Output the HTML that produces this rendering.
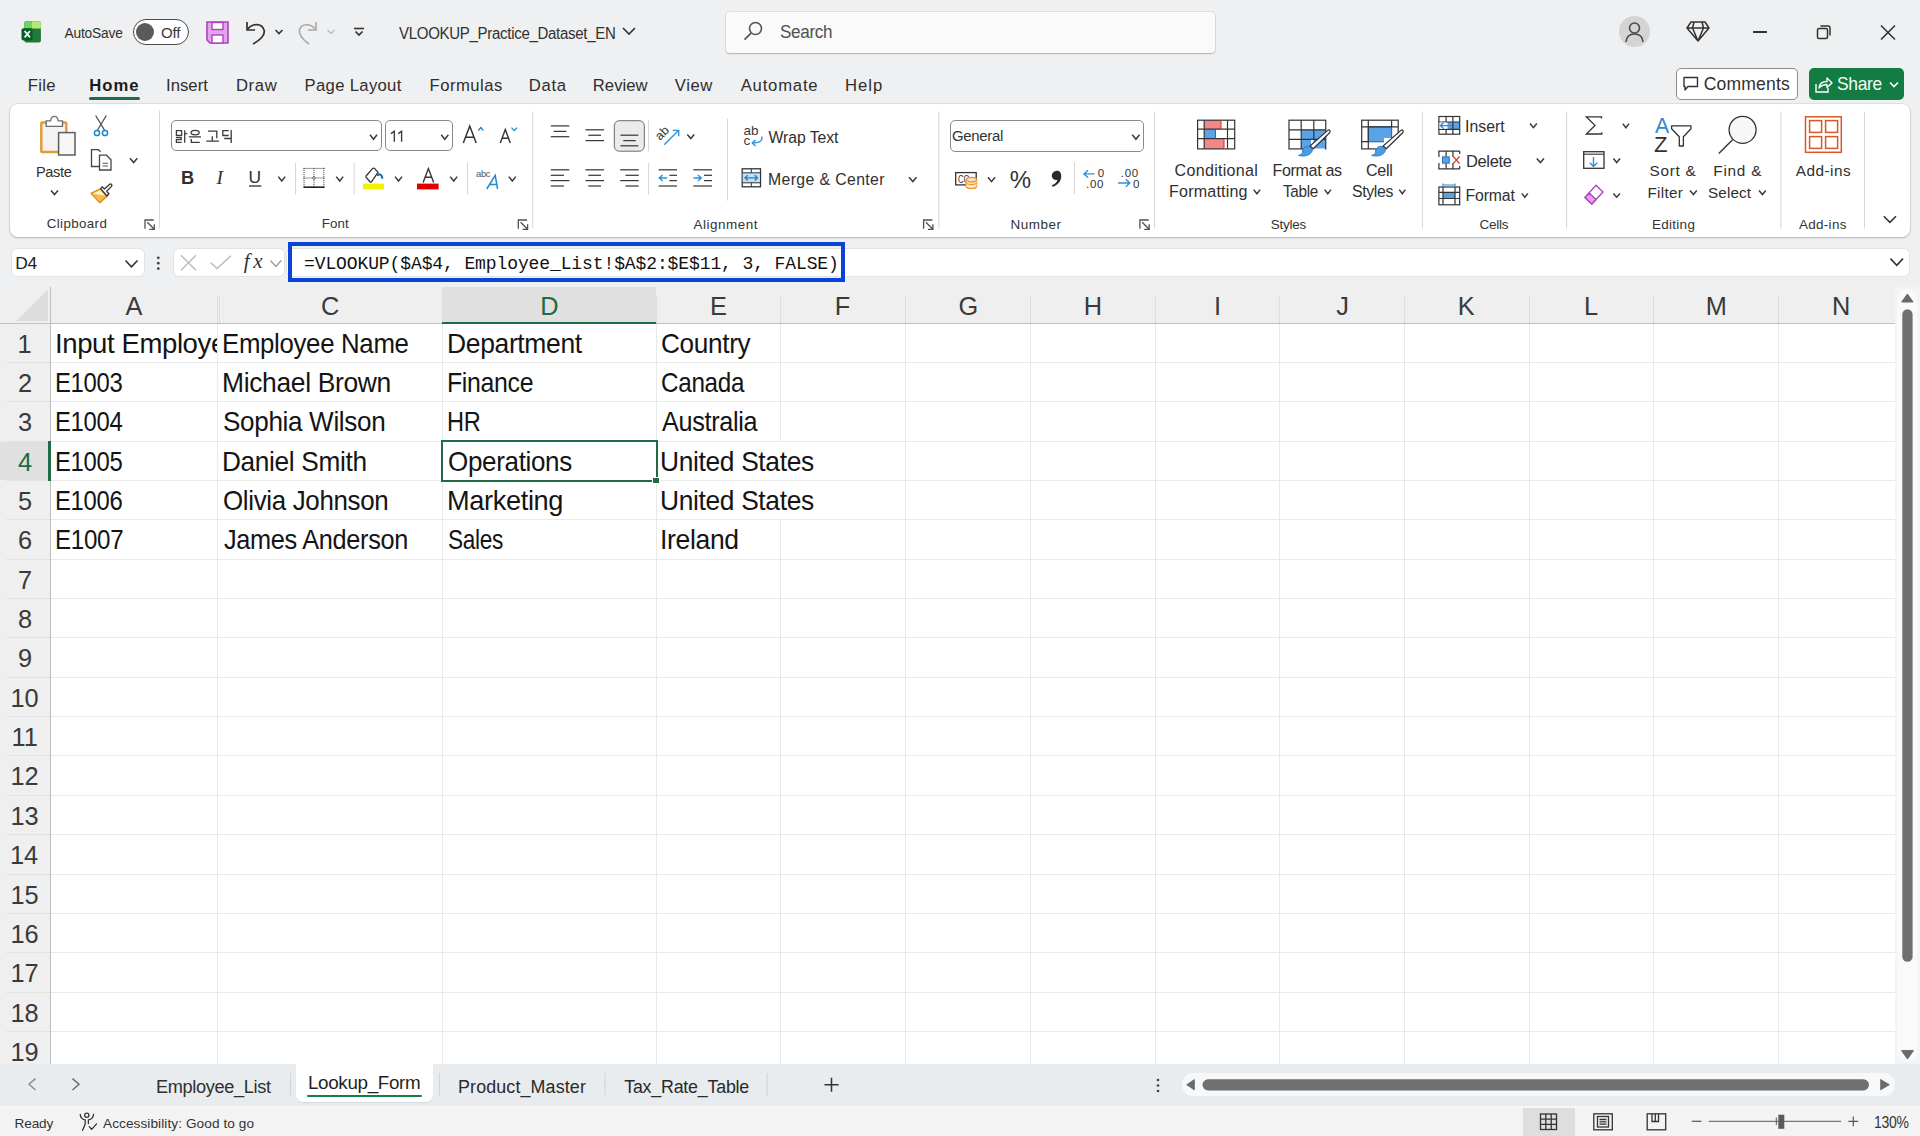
<!DOCTYPE html><html><head><meta charset="utf-8"><style>html,body{margin:0;padding:0;width:1920px;height:1136px;overflow:hidden;position:relative;background:#eef0f1;font-family:"Liberation Sans",sans-serif}</style></head><body><svg style="position:absolute;left:19px;top:20px;" width="24" height="24" viewBox="0 0 24 24" fill="none">
      <rect x="5.3" y="1.2" width="16.6" height="21.2" rx="2" fill="#1d7a38"/>
      <path d="M5.3 3.2 a2 2 0 0 1 2 -2 h5.6 v7.3 h-7.6 z" fill="#6ed462"/>
      <path d="M12.9 1.2 h7 a2 2 0 0 1 2 2 v5.3 h-9 z" fill="#b5e774"/>
      <rect x="2.5" y="8.3" width="11" height="12.2" rx="2" fill="#0b5a27"/>
      <path d="M5.6 11 L11 17.3 M11 11 L5.6 17.3" stroke="#e8fff0" stroke-width="1.8"/>
    </svg>
<div style="position:absolute;left:64.40px;top:26.60px;white-space:nowrap;color:#303030;font-family:'Liberation Sans', sans-serif;font-size:13.77px;line-height:13.77px;font-weight:400;letter-spacing:-0.164px;">AutoSave</div>
<div style="position:absolute;left:132.5px;top:18.75px;width:56.25px;height:26.25px;border:1.6px solid #4a4a4a;border-radius:14px;box-sizing:border-box;background:#fff"></div>
<div style="position:absolute;left:136px;top:23px;width:18px;height:18px;background:#5a5a5a;border-radius:50%"></div>
<div style="position:absolute;left:160.90px;top:24.60px;white-space:nowrap;color:#3a3a3a;font-family:'Liberation Sans', sans-serif;font-size:15.07px;line-height:15.07px;font-weight:400;letter-spacing:-0.150px;">Off</div>
<svg style="position:absolute;left:206px;top:21px;" width="24" height="24" viewBox="0 0 24 24" fill="none">
      <path d="M1 1 H22 V22 H4 L1 19 Z" fill="#e4a3ee" stroke="#b040c0" stroke-width="1.6"/>
      <rect x="6" y="1.5" width="11" height="7" fill="#fff" stroke="#b040c0" stroke-width="1.4"/>
      <rect x="6" y="14" width="11" height="8" fill="#fff" stroke="#b040c0" stroke-width="1.4"/>
    </svg>
<svg style="position:absolute;left:244px;top:19px;" width="26" height="27" viewBox="0 0 26 27" fill="none">
      <path d="M3 3 V11 H11" stroke="#333" stroke-width="1.7" fill="none"/>
      <path d="M3.5 10.5 C8 4 18 4 20 11 C21.5 16 18 20 9 25" stroke="#333" stroke-width="1.7" fill="none"/>
    </svg>
<svg style="position:absolute;left:274px;top:28px;" width="10" height="8" viewBox="0 0 10 8" fill="none"><path d="M1.5 2 L5 5.5 L8.5 2" stroke="#333" stroke-width="1.6"/></svg>
<svg style="position:absolute;left:297px;top:19px;" width="24" height="27" viewBox="0 0 24 27" fill="none">
      <path d="M19 3 V11 H11" stroke="#a8a8a8" stroke-width="1.6" fill="none"/>
      <path d="M18.5 10.5 C14 4 4 4 2.5 11 C1.5 16 5 20 12 25" stroke="#a8a8a8" stroke-width="1.6" fill="none"/>
    </svg>
<svg style="position:absolute;left:326px;top:28px;" width="10" height="8" viewBox="0 0 10 8" fill="none"><path d="M1.5 2 L5 5.5 L8.5 2" stroke="#c0c0c0" stroke-width="1.5"/></svg>
<svg style="position:absolute;left:352px;top:26px;" width="14" height="12" viewBox="0 0 14 12" fill="none"><path d="M2 2.5 H12" stroke="#333" stroke-width="1.6"/><path d="M3.5 5.5 L7 9 L10.5 5.5" stroke="#333" stroke-width="1.7"/></svg>
<div style="position:absolute;left:399.00px;top:24.70px;white-space:nowrap;color:#303030;font-family:'Liberation Sans', sans-serif;font-size:17.25px;line-height:17.25px;font-weight:400;letter-spacing:-0.350px;transform:scaleX(0.8713);transform-origin:0 0;">VLOOKUP_Practice_Dataset_EN</div>
<svg style="position:absolute;left:621px;top:25px;" width="16" height="12" viewBox="0 0 16 12" fill="none"><path d="M2 3 L8 9 L14 3" stroke="#333" stroke-width="1.6"/></svg>
<div style="position:absolute;left:726px;top:11.5px;width:489px;height:41px;background:#fafafa;border-radius:4px;box-shadow:0 1px 1.5px rgba(0,0,0,0.2), 0 0 0 1px rgba(0,0,0,0.07)"></div>
<svg style="position:absolute;left:742px;top:20px;" width="22" height="22" viewBox="0 0 22 22" fill="none"><circle cx="13.5" cy="8.5" r="6" stroke="#555" stroke-width="1.6"/><path d="M9.3 12.8 L2.5 19.6" stroke="#555" stroke-width="1.7"/></svg>
<div style="position:absolute;left:780.02px;top:24.40px;white-space:nowrap;color:#505050;font-family:'Liberation Sans', sans-serif;font-size:17.54px;line-height:17.54px;font-weight:400;letter-spacing:-0.350px;transform:scaleX(0.9761);transform-origin:0 0;">Search</div>
<div style="position:absolute;left:1619px;top:16.25px;width:31px;height:31px;background:#d4d4d4;border-radius:50%"></div>
<svg style="position:absolute;left:1622px;top:19px;" width="25" height="25" viewBox="0 0 25 25" fill="none"><circle cx="12.5" cy="9" r="5" stroke="#4a4a4a" stroke-width="1.6"/><path d="M4 23 C4.5 17 8 15 12.5 15 C17 15 20.5 17 21 23" stroke="#4a4a4a" stroke-width="1.6"/></svg>
<svg style="position:absolute;left:1685px;top:19px;" width="26" height="24" viewBox="0 0 26 24" fill="none"><path d="M6 3 H20 L24 9 L13 22 L2 9 Z M2 9 H24 M9 3 L7.5 9 L13 22 L18.5 9 L17 3" stroke="#333" stroke-width="1.5" stroke-linejoin="round"/></svg>
<div style="position:absolute;left:1753px;top:31px;width:14px;height:1.6px;background:#333"></div>
<svg style="position:absolute;left:1815px;top:23px;" width="18" height="18" viewBox="0 0 18 18" fill="none"><rect x="2.5" y="5.5" width="10" height="10" rx="1.5" stroke="#333" stroke-width="1.5"/><path d="M5.5 3 H13 a2 2 0 0 1 2 2 V12.5" stroke="#333" stroke-width="1.5"/></svg>
<svg style="position:absolute;left:1879px;top:24px;" width="18" height="17" viewBox="0 0 18 17" fill="none"><path d="M2 1.5 L16 15.5 M16 1.5 L2 15.5" stroke="#333" stroke-width="1.6"/></svg>
<div style="position:absolute;left:1676.25px;top:68px;width:122px;height:32px;background:#fff;border:1px solid #8c8c8c;border-radius:5px;box-sizing:border-box"></div>
<svg style="position:absolute;left:1682px;top:76px;" width="18" height="17" viewBox="0 0 18 17" fill="none"><path d="M2 1.5 H15.5 V10.5 H6 L3 14 V10.5 H2 Z" stroke="#333" stroke-width="1.4" stroke-linejoin="round"/></svg>
<div style="position:absolute;left:1703.75px;top:76.40px;white-space:nowrap;color:#303030;font-family:'Liberation Sans', sans-serif;font-size:17.54px;line-height:17.54px;font-weight:400;letter-spacing:0.179px;">Comments</div>
<div style="position:absolute;left:1809.4px;top:68px;width:94.4px;height:32px;background:#137c43;border-radius:5px"></div>
<svg style="position:absolute;left:1814px;top:75px;" width="19" height="18" viewBox="0 0 19 18" fill="none"><path d="M2 9 V17 H14 V13" stroke="#fff" stroke-width="1.4"/><path d="M5 13 C5.5 8 9 6.5 13 6.5 V3 L18 8 L13 12.5 V9.5 C10 9.5 7.5 10.5 5 13 Z" stroke="#fff" stroke-width="1.4" stroke-linejoin="round"/></svg>
<div style="position:absolute;left:1836.55px;top:75.40px;white-space:nowrap;color:#f2fff4;font-family:'Liberation Sans', sans-serif;font-size:18.26px;line-height:18.26px;font-weight:400;letter-spacing:-0.350px;transform:scaleX(0.9539);transform-origin:0 0;">Share</div>
<svg style="position:absolute;left:1888px;top:80px;" width="12" height="9" viewBox="0 0 12 9" fill="none"><path d="M2 2.5 L6 6.5 L10 2.5" stroke="#fff" stroke-width="1.6"/></svg>
<div style="position:absolute;left:27.80px;top:78.00px;white-space:nowrap;color:#2e2e2e;font-family:'Liberation Sans', sans-serif;font-size:16.67px;line-height:16.67px;font-weight:400;letter-spacing:0.300px;">File</div>
<div style="position:absolute;left:89.20px;top:78.00px;white-space:nowrap;color:#1b1b1b;font-family:'Liberation Sans', sans-serif;font-size:16.67px;line-height:16.67px;font-weight:700;letter-spacing:1.033px;">Home</div>
<div style="position:absolute;left:166.00px;top:78.00px;white-space:nowrap;color:#2e2e2e;font-family:'Liberation Sans', sans-serif;font-size:16.67px;line-height:16.67px;font-weight:400;letter-spacing:0.040px;">Insert</div>
<div style="position:absolute;left:235.90px;top:78.00px;white-space:nowrap;color:#2e2e2e;font-family:'Liberation Sans', sans-serif;font-size:16.67px;line-height:16.67px;font-weight:400;letter-spacing:0.700px;">Draw</div>
<div style="position:absolute;left:304.60px;top:78.00px;white-space:nowrap;color:#2e2e2e;font-family:'Liberation Sans', sans-serif;font-size:16.67px;line-height:16.67px;font-weight:400;letter-spacing:0.320px;">Page Layout</div>
<div style="position:absolute;left:429.50px;top:78.00px;white-space:nowrap;color:#2e2e2e;font-family:'Liberation Sans', sans-serif;font-size:16.67px;line-height:16.67px;font-weight:400;letter-spacing:0.471px;">Formulas</div>
<div style="position:absolute;left:528.80px;top:78.00px;white-space:nowrap;color:#2e2e2e;font-family:'Liberation Sans', sans-serif;font-size:16.67px;line-height:16.67px;font-weight:400;letter-spacing:0.667px;">Data</div>
<div style="position:absolute;left:592.80px;top:78.00px;white-space:nowrap;color:#2e2e2e;font-family:'Liberation Sans', sans-serif;font-size:16.67px;line-height:16.67px;font-weight:400;letter-spacing:0.040px;">Review</div>
<div style="position:absolute;left:674.80px;top:78.00px;white-space:nowrap;color:#2e2e2e;font-family:'Liberation Sans', sans-serif;font-size:16.67px;line-height:16.67px;font-weight:400;letter-spacing:0.600px;">View</div>
<div style="position:absolute;left:740.70px;top:78.00px;white-space:nowrap;color:#2e2e2e;font-family:'Liberation Sans', sans-serif;font-size:16.67px;line-height:16.67px;font-weight:400;letter-spacing:0.800px;">Automate</div>
<div style="position:absolute;left:845.00px;top:78.00px;white-space:nowrap;color:#2e2e2e;font-family:'Liberation Sans', sans-serif;font-size:16.67px;line-height:16.67px;font-weight:400;letter-spacing:1.000px;">Help</div>
<div style="position:absolute;left:89px;top:97px;width:51px;height:3px;background:#1e6b45;border-radius:2px"></div>
<div style="position:absolute;left:10px;top:104px;width:1900px;height:133px;background:#fff;border-radius:8px;box-shadow:0 1px 2px rgba(0,0,0,0.2), 0 0 0 1px rgba(0,0,0,0.07)"></div>
<div style="position:absolute;left:36.03px;top:164.60px;white-space:nowrap;color:#303030;font-family:'Liberation Sans', sans-serif;font-size:14.93px;line-height:14.93px;font-weight:400;letter-spacing:-0.350px;transform:scaleX(0.9747);transform-origin:0 0;">Paste</div>
<div style="position:absolute;left:46.70px;top:217.40px;white-space:nowrap;color:#333;font-family:'Liberation Sans', sans-serif;font-size:13.33px;line-height:13.33px;font-weight:400;letter-spacing:0.387px;">Clipboard</div>
<div style="position:absolute;left:170.8px;top:120.2px;width:210.9px;height:31.1px;border:1px solid #8a8a8a;border-radius:5px;box-sizing:border-box;background:#fff"></div>
<div style="position:absolute;left:385px;top:120.2px;width:67.7px;height:31.1px;border:1px solid #8a8a8a;border-radius:5px;box-sizing:border-box;background:#fff"></div>
<div style="position:absolute;left:181.00px;top:168.60px;white-space:nowrap;color:#2e2e2e;font-family:'Liberation Sans', sans-serif;font-size:18.26px;line-height:18.26px;font-weight:700;">B</div>
<div style="position:absolute;left:216.50px;top:167.80px;white-space:nowrap;color:#2e2e2e;font-family:'Liberation Serif', serif;font-size:19.38px;line-height:19.38px;font-weight:400;font-style:italic;">I</div>
<div style="position:absolute;left:248.50px;top:169.20px;white-space:nowrap;color:#2e2e2e;font-family:'Liberation Sans', sans-serif;font-size:17.39px;line-height:17.39px;font-weight:400;">U</div>
<div style="position:absolute;left:475.70px;top:168.80px;white-space:nowrap;color:#555;font-family:'Liberation Sans', sans-serif;font-size:9.80px;line-height:9.80px;font-weight:400;letter-spacing:-0.350px;transform:scaleX(0.9650);transform-origin:0 0;">abc</div>
<div style="position:absolute;left:321.80px;top:217.40px;white-space:nowrap;color:#333;font-family:'Liberation Sans', sans-serif;font-size:13.33px;line-height:13.33px;font-weight:400;letter-spacing:0.067px;">Font</div>
<div style="position:absolute;left:743.60px;top:124.30px;white-space:nowrap;color:#3a3a3a;font-family:'Liberation Sans', sans-serif;font-size:13.50px;line-height:13.50px;font-weight:400;">ab</div>
<div style="position:absolute;left:743.60px;top:134.20px;white-space:nowrap;color:#3a3a3a;font-family:'Liberation Sans', sans-serif;font-size:13.50px;line-height:13.50px;font-weight:400;">c</div>
<div style="position:absolute;left:768.50px;top:129.60px;white-space:nowrap;color:#303030;font-family:'Liberation Sans', sans-serif;font-size:15.80px;line-height:15.80px;font-weight:400;letter-spacing:-0.075px;">Wrap Text</div>
<div style="position:absolute;left:768.00px;top:172.30px;white-space:nowrap;color:#303030;font-family:'Liberation Sans', sans-serif;font-size:15.80px;line-height:15.80px;font-weight:400;letter-spacing:0.385px;">Merge &amp; Center</div>
<div style="position:absolute;left:693.60px;top:217.50px;white-space:nowrap;color:#333;font-family:'Liberation Sans', sans-serif;font-size:13.48px;line-height:13.48px;font-weight:400;letter-spacing:0.487px;">Alignment</div>
<div style="position:absolute;left:950.2px;top:120.4px;width:194px;height:31.2px;border:1px solid #8a8a8a;border-radius:5px;box-sizing:border-box;background:#fff"></div>
<div style="position:absolute;left:952.33px;top:128.30px;white-space:nowrap;color:#333;font-family:'Liberation Sans', sans-serif;font-size:15.51px;line-height:15.51px;font-weight:400;letter-spacing:-0.350px;transform:scaleX(0.9666);transform-origin:0 0;">General</div>
<div style="position:absolute;left:958.20px;top:175.00px;white-space:nowrap;color:#333;font-family:'Liberation Sans', sans-serif;font-size:10.00px;line-height:10.00px;font-weight:400;letter-spacing:-0.350px;transform:scaleX(0.7912);transform-origin:0 0;">CC</div>
<div style="position:absolute;left:1009.70px;top:168.20px;white-space:nowrap;color:#333;font-family:'Liberation Sans', sans-serif;font-size:24.00px;line-height:24.00px;font-weight:400;">%</div>
<div style="position:absolute;left:1097.70px;top:167.50px;white-space:nowrap;color:#333;font-family:'Liberation Sans', sans-serif;font-size:11.50px;line-height:11.50px;font-weight:400;">0</div>
<div style="position:absolute;left:1086.00px;top:178.80px;white-space:nowrap;color:#333;font-family:'Liberation Sans', sans-serif;font-size:11.50px;line-height:11.50px;font-weight:400;letter-spacing:0.750px;">.00</div>
<div style="position:absolute;left:1120.70px;top:167.50px;white-space:nowrap;color:#333;font-family:'Liberation Sans', sans-serif;font-size:11.50px;line-height:11.50px;font-weight:400;letter-spacing:0.750px;">.00</div>
<div style="position:absolute;left:1133.00px;top:178.80px;white-space:nowrap;color:#333;font-family:'Liberation Sans', sans-serif;font-size:11.50px;line-height:11.50px;font-weight:400;">0</div>
<div style="position:absolute;left:1010.50px;top:217.50px;white-space:nowrap;color:#333;font-family:'Liberation Sans', sans-serif;font-size:13.48px;line-height:13.48px;font-weight:400;letter-spacing:0.540px;">Number</div>
<div style="position:absolute;left:1174.60px;top:161.70px;white-space:nowrap;color:#303030;font-family:'Liberation Sans', sans-serif;font-size:16.09px;line-height:16.09px;font-weight:400;letter-spacing:0.280px;">Conditional</div>
<div style="position:absolute;left:1169.00px;top:183.40px;white-space:nowrap;color:#303030;font-family:'Liberation Sans', sans-serif;font-size:16.09px;line-height:16.09px;font-weight:400;letter-spacing:0.189px;">Formatting</div>
<div style="position:absolute;left:1272.50px;top:161.70px;white-space:nowrap;color:#303030;font-family:'Liberation Sans', sans-serif;font-size:16.09px;line-height:16.09px;font-weight:400;letter-spacing:-0.350px;">Format as</div>
<div style="position:absolute;left:1282.50px;top:183.40px;white-space:nowrap;color:#303030;font-family:'Liberation Sans', sans-serif;font-size:16.09px;line-height:16.09px;font-weight:400;letter-spacing:-0.350px;transform:scaleX(0.9508);transform-origin:0 0;">Table</div>
<div style="position:absolute;left:1365.90px;top:161.70px;white-space:nowrap;color:#303030;font-family:'Liberation Sans', sans-serif;font-size:16.09px;line-height:16.09px;font-weight:400;letter-spacing:-0.233px;">Cell</div>
<div style="position:absolute;left:1351.62px;top:183.40px;white-space:nowrap;color:#303030;font-family:'Liberation Sans', sans-serif;font-size:16.09px;line-height:16.09px;font-weight:400;letter-spacing:-0.350px;transform:scaleX(0.9839);transform-origin:0 0;">Styles</div>
<div style="position:absolute;left:1270.70px;top:217.50px;white-space:nowrap;color:#333;font-family:'Liberation Sans', sans-serif;font-size:13.48px;line-height:13.48px;font-weight:400;letter-spacing:-0.220px;">Styles</div>
<div style="position:absolute;left:1465.00px;top:118.90px;white-space:nowrap;color:#303030;font-family:'Liberation Sans', sans-serif;font-size:15.80px;line-height:15.80px;font-weight:400;letter-spacing:0.040px;">Insert</div>
<div style="position:absolute;left:1465.51px;top:153.80px;white-space:nowrap;color:#303030;font-family:'Liberation Sans', sans-serif;font-size:16.67px;line-height:16.67px;font-weight:400;letter-spacing:-0.350px;transform:scaleX(0.9890);transform-origin:0 0;">Delete</div>
<div style="position:absolute;left:1465.50px;top:188.10px;white-space:nowrap;color:#303030;font-family:'Liberation Sans', sans-serif;font-size:15.80px;line-height:15.80px;font-weight:400;letter-spacing:-0.120px;">Format</div>
<div style="position:absolute;left:1479.40px;top:217.50px;white-space:nowrap;color:#333;font-family:'Liberation Sans', sans-serif;font-size:13.48px;line-height:13.48px;font-weight:400;letter-spacing:-0.225px;">Cells</div>
<div style="position:absolute;left:1654.90px;top:115.60px;white-space:nowrap;color:#2a8ad4;font-family:'Liberation Sans', sans-serif;font-size:21.30px;line-height:21.30px;font-weight:400;">A</div>
<div style="position:absolute;left:1653.90px;top:133.50px;white-space:nowrap;color:#333;font-family:'Liberation Sans', sans-serif;font-size:22.17px;line-height:22.17px;font-weight:400;">Z</div>
<div style="position:absolute;left:1649.50px;top:163.20px;white-space:nowrap;color:#303030;font-family:'Liberation Sans', sans-serif;font-size:15.36px;line-height:15.36px;font-weight:400;letter-spacing:0.700px;">Sort &amp;</div>
<div style="position:absolute;left:1647.40px;top:184.70px;white-space:nowrap;color:#303030;font-family:'Liberation Sans', sans-serif;font-size:15.22px;line-height:15.22px;font-weight:400;letter-spacing:0.320px;">Filter</div>
<div style="position:absolute;left:1713.30px;top:163.20px;white-space:nowrap;color:#303030;font-family:'Liberation Sans', sans-serif;font-size:15.36px;line-height:15.36px;font-weight:400;letter-spacing:0.740px;">Find &amp;</div>
<div style="position:absolute;left:1708.00px;top:184.70px;white-space:nowrap;color:#303030;font-family:'Liberation Sans', sans-serif;font-size:15.22px;line-height:15.22px;font-weight:400;letter-spacing:0.140px;">Select</div>
<div style="position:absolute;left:1652.00px;top:217.50px;white-space:nowrap;color:#333;font-family:'Liberation Sans', sans-serif;font-size:13.48px;line-height:13.48px;font-weight:400;letter-spacing:0.283px;">Editing</div>
<div style="position:absolute;left:1795.80px;top:163.20px;white-space:nowrap;color:#303030;font-family:'Liberation Sans', sans-serif;font-size:15.36px;line-height:15.36px;font-weight:400;letter-spacing:0.450px;">Add-ins</div>
<div style="position:absolute;left:1798.90px;top:217.50px;white-space:nowrap;color:#333;font-family:'Liberation Sans', sans-serif;font-size:13.48px;line-height:13.48px;font-weight:400;letter-spacing:0.317px;">Add-ins</div>
<svg style="position:absolute;left:0px;top:0px;" width="1920" height="260" viewBox="0 0 1920 260" fill="none"><rect x="41.3" y="122.5" width="25" height="29.5" rx="0.8" fill="#f3f3f3" stroke="#e49a2c" stroke-width="2.4"/><path d="M46.2 126.3 V120.8 H50.6 C51.2 115 57.6 115 58.2 120.8 H62.5 V126.3 Z" fill="#fff" stroke="#6e6e6e" stroke-width="1.3"/><rect x="58.6" y="132.6" width="16.4" height="22.4" fill="#f7f7f7" stroke="#5e5e5e" stroke-width="1.5"/><path d="M51 190.5 L54.5 194.5 L58 190.5" stroke="#3a3a3a" stroke-width="1.5" fill="none"/><path d="M95.6 115.5 L104.8 130.5 M106.3 115.5 L97.2 130.5" stroke="#454545" stroke-width="1.2"/><circle cx="97" cy="133" r="2.6" stroke="#1b86d0" stroke-width="1.5" fill="#fff"/><circle cx="105" cy="133" r="2.6" stroke="#1b86d0" stroke-width="1.5" fill="#fff"/><path d="M99 166.5 H91.5 V149.7 H98.5 L100.5 151.7" stroke="#454545" stroke-width="1.3" fill="none"/><path d="M99.5 155.2 H106.5 L111 159.7 V170 H99.5 Z" fill="#fff" stroke="#454545" stroke-width="1.3"/><path d="M102.5 163.3 H108 M102.5 166 H108" stroke="#555" stroke-width="1"/><path d="M130 158.3 L133.65 162.5 L137.3 158.3" stroke="#3a3a3a" stroke-width="1.5" fill="none"/><path d="M91 193.3 L100.3 188.9 L107 196.2 L99.8 202.8 Z" fill="#f6b94c" stroke="#d98a1c" stroke-width="1.2" stroke-linejoin="round"/><path d="M93 193.6 L100.2 190.2 L105.2 195.8 Z" fill="#fff1cc"/><path d="M100.6 188.7 L102.2 186.8 L104.4 189.1 L109.5 184.4 a1.4 1.4 0 0 1 2 2 L106.7 191.2 L108.9 193.7 L106.9 196 Z" fill="#fff" stroke="#333" stroke-width="1.3" stroke-linejoin="round"/><path d="M145.0 228.8 V220.0 H153.8" stroke="#505050" stroke-width="1.3" fill="none"/><path d="M147.3 222.3 L154.3 229.3 M154.3 224.3 V229.3 H149.3" stroke="#505050" stroke-width="1.3" fill="none"/><path d="M159.5 110.5 V228.5" stroke="#d6d6d6" stroke-width="1"/><g stroke="#3c3c3c" stroke-width="1.3" fill="none"><path d="M176.4 130.7 H181.6 V135.3 H176.4 Z M184.7 130.2 V142.8 M184.7 133.6 H187.3"/><path d="M176 137.4 H181.2 V139.5 H176.4 V142.4 H181.6"/><ellipse cx="195.1" cy="132.6" rx="4.1" ry="2.3"/><path d="M188.8 136.8 H201 M191.3 139 V142.4 H199.7"/><path d="M208 131.2 H216.8 V138.3 M212.3 136.3 V141.1 M206.3 141.1 H219"/><path d="M228.7 130.7 H222.8 V135.5 H228.7 M231.2 130 V143 M224.2 138.5 H231.2"/></g><path d="M370 134.8 L373.5 139.2 L377 134.8" stroke="#3a3a3a" stroke-width="1.5" fill="none"/><path d="M441.2 134.8 L444.79999999999995 139.2 L448.4 134.8" stroke="#3a3a3a" stroke-width="1.5" fill="none"/><path d="M394.3 141.8 V131.2 L391 133.6 M401.6 141.8 V131.2 L398.3 133.6" stroke="#333" stroke-width="1.3" fill="none"/><path d="M463.3 143 L469.75 126 L476.2 143 M465.6 137.2 H473.9" stroke="#333" stroke-width="1.5" fill="none"/><path d="M478.3 130.5 L480.8 127.6 L483.3 130.5" stroke="#1f86c8" stroke-width="1.3" fill="none"/><path d="M500.3 143 L505.3 129.6 L510.3 143 M502.2 138.2 H508.4" stroke="#333" stroke-width="1.4" fill="none"/><path d="M511.5 127.6 L514.25 130.6 L517 127.6" stroke="#1f86c8" stroke-width="1.3" fill="none"/><path d="M249 186 H261.3" stroke="#2e2e2e" stroke-width="1.3"/><path d="M278.3 176.6 L281.75 181 L285.2 176.6" stroke="#3a3a3a" stroke-width="1.5" fill="none"/><path d="M295.5 162.6 V194.4" stroke="#d6d6d6" stroke-width="1"/><g fill="#555"><rect x="303.45" y="167.9" width="1.1" height="1.1"/><rect x="303.45" y="177.4" width="1.1" height="1.1"/><rect x="305.45" y="167.9" width="1.1" height="1.1"/><rect x="305.45" y="177.4" width="1.1" height="1.1"/><rect x="307.45" y="167.9" width="1.1" height="1.1"/><rect x="307.45" y="177.4" width="1.1" height="1.1"/><rect x="309.45" y="167.9" width="1.1" height="1.1"/><rect x="309.45" y="177.4" width="1.1" height="1.1"/><rect x="311.45" y="167.9" width="1.1" height="1.1"/><rect x="311.45" y="177.4" width="1.1" height="1.1"/><rect x="313.45" y="167.9" width="1.1" height="1.1"/><rect x="313.45" y="177.4" width="1.1" height="1.1"/><rect x="315.45" y="167.9" width="1.1" height="1.1"/><rect x="315.45" y="177.4" width="1.1" height="1.1"/><rect x="317.45" y="167.9" width="1.1" height="1.1"/><rect x="317.45" y="177.4" width="1.1" height="1.1"/><rect x="319.45" y="167.9" width="1.1" height="1.1"/><rect x="319.45" y="177.4" width="1.1" height="1.1"/><rect x="321.45" y="167.9" width="1.1" height="1.1"/><rect x="321.45" y="177.4" width="1.1" height="1.1"/><rect x="323.45" y="167.9" width="1.1" height="1.1"/><rect x="323.45" y="177.4" width="1.1" height="1.1"/><rect x="303.5" y="167.85" width="1.1" height="1.1"/><rect x="323.3" y="167.85" width="1.1" height="1.1"/><rect x="313.4" y="167.85" width="1.1" height="1.1"/><rect x="303.5" y="169.85" width="1.1" height="1.1"/><rect x="323.3" y="169.85" width="1.1" height="1.1"/><rect x="313.4" y="169.85" width="1.1" height="1.1"/><rect x="303.5" y="171.85" width="1.1" height="1.1"/><rect x="323.3" y="171.85" width="1.1" height="1.1"/><rect x="313.4" y="171.85" width="1.1" height="1.1"/><rect x="303.5" y="173.85" width="1.1" height="1.1"/><rect x="323.3" y="173.85" width="1.1" height="1.1"/><rect x="313.4" y="173.85" width="1.1" height="1.1"/><rect x="303.5" y="175.85" width="1.1" height="1.1"/><rect x="323.3" y="175.85" width="1.1" height="1.1"/><rect x="313.4" y="175.85" width="1.1" height="1.1"/><rect x="303.5" y="177.85" width="1.1" height="1.1"/><rect x="323.3" y="177.85" width="1.1" height="1.1"/><rect x="313.4" y="177.85" width="1.1" height="1.1"/><rect x="303.5" y="179.85" width="1.1" height="1.1"/><rect x="323.3" y="179.85" width="1.1" height="1.1"/><rect x="313.4" y="179.85" width="1.1" height="1.1"/><rect x="303.5" y="181.85" width="1.1" height="1.1"/><rect x="323.3" y="181.85" width="1.1" height="1.1"/><rect x="313.4" y="181.85" width="1.1" height="1.1"/><rect x="303.5" y="183.85" width="1.1" height="1.1"/><rect x="323.3" y="183.85" width="1.1" height="1.1"/><rect x="313.4" y="183.85" width="1.1" height="1.1"/><rect x="303.5" y="185.85" width="1.1" height="1.1"/><rect x="323.3" y="185.85" width="1.1" height="1.1"/><rect x="313.4" y="185.85" width="1.1" height="1.1"/></g><circle cx="314" cy="178" r="1.3" stroke="#555" stroke-width="0.9" fill="#fff"/><path d="M303.5 187.2 H324.5" stroke="#222" stroke-width="1.6"/><path d="M336.2 176.6 L339.7 181 L343.2 176.6" stroke="#3a3a3a" stroke-width="1.5" fill="none"/><path d="M354.2 162.6 V194.4" stroke="#d6d6d6" stroke-width="1"/><path d="M366.5 175.5 L372.5 168.6 a1.5 1.5 0 0 1 2.2 0 L378 172.3 L371.5 181.8 a1 1 0 0 1 -1.5 0 L366.2 177.3 a1.2 1.2 0 0 1 0.3 -1.8 Z" stroke="#333" stroke-width="1.3" fill="#fff"/><path d="M377 175.5 C379.5 173.5 382 174 382.3 178.8" stroke="#1a6aa8" stroke-width="2" fill="none"/><rect x="363" y="183.6" width="21" height="5.8" fill="#f2f200"/><path d="M395 176.6 L398.5 181 L402 176.6" stroke="#3a3a3a" stroke-width="1.5" fill="none"/><path d="M423.1 182.4 L428.4 168.6 L433.7 182.4 M425 177.3 H431.8" stroke="#333" stroke-width="1.4" fill="none"/><rect x="417" y="183.6" width="21.6" height="5.8" fill="#e00000"/><path d="M450.2 176.6 L453.7 181 L457.2 176.6" stroke="#3a3a3a" stroke-width="1.5" fill="none"/><path d="M467.5 162.6 V194.4" stroke="#d6d6d6" stroke-width="1"/><path d="M508.8 176.6 L512.3 181 L515.8 176.6" stroke="#3a3a3a" stroke-width="1.5" fill="none"/><path d="M486.8 189 L495.2 175.4 L497.6 189 M489.6 184.4 H496.9" stroke="#2388d0" stroke-width="1.5" fill="none"/><path d="M518.3000000000001 228.8 V220.0 H527.1" stroke="#505050" stroke-width="1.3" fill="none"/><path d="M520.6 222.3 L527.6 229.3 M527.6 224.3 V229.3 H522.6" stroke="#505050" stroke-width="1.3" fill="none"/><path d="M532.8 111.5 V228.5" stroke="#d6d6d6" stroke-width="1"/><path d="M550.8 125.9 H569.3" stroke="#3a3a3a" stroke-width="1.25"/><path d="M553.6 131.4 H566.4" stroke="#3a3a3a" stroke-width="1.25"/><path d="M550.8 136.7 H569.3" stroke="#3a3a3a" stroke-width="1.25"/><path d="M585.5 129.8 H604" stroke="#3a3a3a" stroke-width="1.25"/><path d="M588.3 135.25 H601" stroke="#3a3a3a" stroke-width="1.25"/><path d="M585.5 140.6 H604" stroke="#3a3a3a" stroke-width="1.25"/><rect x="614.3" y="120.7" width="30" height="30.5" rx="5" fill="#ebebeb" stroke="#6a6a6a" stroke-width="1"/><path d="M620.4 135.2 H638.4" stroke="#3a3a3a" stroke-width="1.25"/><path d="M623.3 140.6 H635.8" stroke="#3a3a3a" stroke-width="1.25"/><path d="M620.4 145.8 H638.4" stroke="#3a3a3a" stroke-width="1.25"/><path d="M648.6 120.4 V151.4" stroke="#d6d6d6" stroke-width="1"/><path d="M664.2 144.8 L678.5 130.5 M672.8 130.3 H678.7 V136.2" stroke="#2b8fd6" stroke-width="1.3" fill="none"/><g transform="translate(660,141) rotate(-45)"><text x="0" y="0" font-family="Liberation Sans" font-size="12.5" fill="#3a3a3a">ab</text></g><path d="M687.3 134.6 L690.75 138.6 L694.2 134.6" stroke="#3a3a3a" stroke-width="1.5" fill="none"/><path d="M550.8 169.8 H569.3" stroke="#3a3a3a" stroke-width="1.25"/><path d="M585.5 169.8 H604" stroke="#3a3a3a" stroke-width="1.25"/><path d="M620.2 169.8 H638.75" stroke="#3a3a3a" stroke-width="1.25"/><path d="M550.8 175.3 H563.9" stroke="#3a3a3a" stroke-width="1.25"/><path d="M588.3 175.3 H601" stroke="#3a3a3a" stroke-width="1.25"/><path d="M625.5 175.3 H638.75" stroke="#3a3a3a" stroke-width="1.25"/><path d="M550.8 180.6 H569.3" stroke="#3a3a3a" stroke-width="1.25"/><path d="M585.5 180.6 H604" stroke="#3a3a3a" stroke-width="1.25"/><path d="M620.2 180.6 H638.75" stroke="#3a3a3a" stroke-width="1.25"/><path d="M550.8 186 H563.9" stroke="#3a3a3a" stroke-width="1.25"/><path d="M588.3 186 H601" stroke="#3a3a3a" stroke-width="1.25"/><path d="M625.5 186 H638.75" stroke="#3a3a3a" stroke-width="1.25"/><path d="M648.6 163 V194.5" stroke="#d6d6d6" stroke-width="1"/><path d="M658.6 169.8 H677" stroke="#3a3a3a" stroke-width="1.25"/><path d="M669.4 175.3 H677" stroke="#3a3a3a" stroke-width="1.25"/><path d="M669.4 180.6 H677" stroke="#3a3a3a" stroke-width="1.25"/><path d="M658.6 186 H677" stroke="#3a3a3a" stroke-width="1.25"/><path d="M667 178 H659.5 M662.5 175 L659.3 178 L662.5 181" stroke="#2b8fd6" stroke-width="1.4" fill="none"/><path d="M693.3 169.8 H712" stroke="#3a3a3a" stroke-width="1.25"/><path d="M704 175.3 H712" stroke="#3a3a3a" stroke-width="1.25"/><path d="M704 180.6 H712" stroke="#3a3a3a" stroke-width="1.25"/><path d="M693.3 186 H712" stroke="#3a3a3a" stroke-width="1.25"/><path d="M693.5 178 H701 M698 175 L701.2 178 L698 181" stroke="#2b8fd6" stroke-width="1.4" fill="none"/><path d="M727.5 118.6 V200.6" stroke="#d6d6d6" stroke-width="1"/><path d="M752.5 143 C758 143 762 142 762 138 V136.5" stroke="#2b8fd6" stroke-width="1.4" fill="none"/><path d="M755.5 140 L752.3 143 L755.5 146" stroke="#2b8fd6" stroke-width="1.4" fill="none"/><rect x="742.2" y="168.8" width="18.3" height="18" fill="#fff" stroke="#333" stroke-width="1.3"/><rect x="742.8" y="172.8" width="17.2" height="10" fill="#bfe0f7"/><path d="M742.2 172.8 H760.5" stroke="#333" stroke-width="1"/><path d="M742.2 182.8 H760.5" stroke="#333" stroke-width="1"/><path d="M751.3 168.8 V172.8" stroke="#333" stroke-width="1"/><path d="M751.3 182.8 V186.8" stroke="#333" stroke-width="1"/><path d="M745 177.8 H757.5 M747.8 175.2 L745 177.8 L747.8 180.4 M754.7 175.2 L757.5 177.8 L754.7 180.4" stroke="#2b7fc0" stroke-width="1.3" fill="none"/><path d="M909 177.2 L912.75 181.5 L916.5 177.2" stroke="#3a3a3a" stroke-width="1.5" fill="none"/><path d="M923.6 228.8 V220.0 H932.4" stroke="#505050" stroke-width="1.3" fill="none"/><path d="M925.9 222.3 L932.9 229.3 M932.9 224.3 V229.3 H927.9" stroke="#505050" stroke-width="1.3" fill="none"/><path d="M938.8 111.5 V228.5" stroke="#d6d6d6" stroke-width="1"/><path d="M1132.3 134.8 L1135.9 139.2 L1139.5 134.8" stroke="#3a3a3a" stroke-width="1.5" fill="none"/><rect x="955.7" y="172.6" width="20.5" height="12.3" fill="none" stroke="#333" stroke-width="1.3"/><g stroke="#e8901e" stroke-width="1.2" fill="#fde3c0"><ellipse cx="971.4" cy="186.2" rx="5.2" ry="2.3"/><path d="M966.2 179.5 V186.2 M976.6 179.5 V186.2"/><rect x="966.2" y="179.6" width="10.4" height="6.6" stroke="none"/><ellipse cx="971.4" cy="179.6" rx="5.2" ry="2.3"/><path d="M966.2 182.9 C967 185 975.8 185 976.6 182.9" fill="none"/></g><path d="M988 177.2 L991.5 181.6 L995 177.2" stroke="#3a3a3a" stroke-width="1.5" fill="none"/><path d="M1055.8 171 C1059.5 170 1061.6 173 1061.2 177 C1060.8 181.5 1057.5 185.5 1052.5 186.8 L1051.8 185.3 C1055 184 1057 182 1057.5 180 C1054 180.3 1051.6 178.3 1051.8 175.5 C1052 172.8 1053.6 171.4 1055.8 171 Z" fill="#2a2a2a"/><path d="M1074.5 162 V194.2" stroke="#d6d6d6" stroke-width="1"/><path d="M1094.5 173.9 H1084.2 M1088 170.2 L1084 173.9 L1088 177.6" stroke="#2b8fd6" stroke-width="1.4" fill="none"/><path d="M1118 183 H1129.5 M1125.8 179.3 L1129.8 183 L1125.8 186.7" stroke="#2b8fd6" stroke-width="1.4" fill="none"/><path d="M1139.9 228.8 V220.0 H1148.7" stroke="#505050" stroke-width="1.3" fill="none"/><path d="M1142.2 222.3 L1149.2 229.3 M1149.2 224.3 V229.3 H1144.2" stroke="#505050" stroke-width="1.3" fill="none"/><path d="M1154.6 111.5 V228.5" stroke="#d6d6d6" stroke-width="1"/><rect x="1204.2" y="120.2" width="16.8" height="9" fill="#f48888"/><rect x="1204.2" y="138.7" width="19.8" height="10.2" fill="#f48888"/><rect x="1204.2" y="129.2" width="11.3" height="9.5" fill="#5aa3e6"/><g stroke="#333" stroke-width="1.2" fill="none"><rect x="1197.6" y="120.2" width="37.1" height="28.7"/><path d="M1204.2 120.2 V148.9"/><path d="M1227.5 120.2 V148.9"/><path d="M1197.6 129.2 H1234.7"/><path d="M1197.6 138.7 H1234.7"/></g><path d="M1221 120.2 V129.2 M1224 138.7 V148.9 M1215.5 129.2 V138.7" stroke="#c83030" stroke-width="1"/><path d="M1253.6 189.6 L1256.9 193.8 L1260.2 189.6" stroke="#3a3a3a" stroke-width="1.5" fill="none"/><rect x="1301.2" y="129.8" width="24.5" height="19.1" fill="#5aa3e6"/><g stroke="#333" stroke-width="1.2" fill="none"><rect x="1289" y="120.2" width="36.75" height="28.7"/><path d="M1301.2 120.2 V148.9"/><path d="M1313.8 120.2 V148.9"/><path d="M1289 129.8 H1325.75"/><path d="M1289 139.3 H1325.75"/></g><rect x="1311" y="140" width="14" height="15" fill="#fff"/><rect x="1313.5" y="140" width="11.5" height="8.5" fill="#5aa3e6"/><path d="M1327.5 130.6 C1329.5 129 1331 131 1329.6 132.8 L1313.2 148.8 L1310 146 Z" fill="#fff" stroke="#333" stroke-width="1.2" stroke-linejoin="round"/><path d="M1309.5 146.5 C1305 145.5 1302 149 1302.5 152.5 C1302 154.5 1300 155.2 1298.5 155.3 C1303 157 1311 156 1312.5 149.8 Z" fill="#4d9be0" stroke="#2a7bc4" stroke-width="1"/><path d="M1324.6 189.6 L1327.8 193.8 L1331 189.6" stroke="#3a3a3a" stroke-width="1.5" fill="none"/><rect x="1368.3" y="126.8" width="23.3" height="14.9" fill="#5aa3e6" stroke="#2a6fb8" stroke-width="1.2"/><g stroke="#333" stroke-width="1.2" fill="none"><rect x="1361.7" y="120.2" width="36.5" height="28.7"/><path d="M1368.3 120.2 V148.9 M1391.6 120.2 V126.8 M1361.7 126.8 H1398.2 M1361.7 141.7 H1368.3"/></g><rect x="1384" y="138" width="16" height="12" fill="#fff"/><path d="M1400.6 130.6 C1402.6 129 1404.1 131 1402.6999999999998 132.8 L1386.3 148.8 L1383.1 146 Z" fill="#fff" stroke="#333" stroke-width="1.2" stroke-linejoin="round"/><path d="M1382.6 146.5 C1378.1 145.5 1375.1 149 1375.6 152.5 C1375.1 154.5 1373.1 155.2 1371.6 155.3 C1376.1 157 1384.1 156 1385.6 149.8 Z" fill="#4d9be0" stroke="#2a7bc4" stroke-width="1"/><path d="M1399.2 189.6 L1402.3000000000002 193.8 L1405.4 189.6" stroke="#3a3a3a" stroke-width="1.5" fill="none"/><path d="M1422.4 111.5 V228.5" stroke="#d6d6d6" stroke-width="1"/><rect x="1446.1" y="122" width="13.6" height="7.3" fill="#5aa3e6"/><g stroke="#333" stroke-width="1.2" fill="none"><rect x="1438.9" y="116.5" width="20.8" height="17.7"/><path d="M1446.1 116.5 V134.2 M1452.9 116.5 V134.2 M1438.9 122 H1459.7 M1438.9 129.3 H1459.7"/></g><rect x="1439.5" y="122.6" width="8" height="6.2" fill="#fff"/><path d="M1452 125.6 H1440.5 M1443.8 122.4 L1440.3 125.6 L1443.8 128.8" stroke="#2b8fd6" stroke-width="1.4" fill="none"/><path d="M1530 123.6 L1533.4 127.7 L1536.8 123.6" stroke="#3a3a3a" stroke-width="1.5" fill="none"/><g stroke="#333" stroke-width="1.2" fill="none"><path d="M1459.7 151.1 H1438.9 V156.9 M1438.9 163.1 V168.9 H1459.7 M1446.1 151.1 V156.9 M1452.9 151.1 V156.9 M1446.1 163.1 V168.9 M1452.9 163.1 V168.9 M1459.7 151.1 V154 M1459.7 166 V168.9"/></g><rect x="1442.5" y="156.9" width="6.8" height="6.2" fill="#5aa3e6" stroke="#2a6fb8" stroke-width="1"/><path d="M1453.3 156.5 L1459.5 163.5 M1459.5 156.5 L1453.3 163.5" stroke="#e04040" stroke-width="1.3"/><path d="M1536.8 158.6 L1540.4 162.6 L1544 158.6" stroke="#3a3a3a" stroke-width="1.5" fill="none"/><rect x="1443" y="192.3" width="12" height="6.2" fill="#5aa3e6"/><g stroke="#333" stroke-width="1.2" fill="none"><rect x="1438.9" y="187" width="20.8" height="17.8"/><path d="M1438.9 192.3 H1459.7 M1438.9 198.5 H1459.7 M1443 187 V204.8 M1455 187 V204.8"/></g><path d="M1443 185 H1455 M1443 183.5 V186.5 M1455 183.5 V186.5" stroke="#2b8fd6" stroke-width="1.1"/><path d="M1521.8 193.4 L1524.85 197.2 L1527.9 193.4" stroke="#3a3a3a" stroke-width="1.5" fill="none"/><path d="M1566.6 111.5 V228.5" stroke="#d6d6d6" stroke-width="1"/><path d="M1601.5 118.5 V116.8 H1586.3 L1595 125.4 L1586.3 134 H1601.8 V132.3" stroke="#333" stroke-width="1.3" fill="none"/><path d="M1622.8 123.6 L1625.9 127.7 L1629 123.6" stroke="#3a3a3a" stroke-width="1.5" fill="none"/><rect x="1583.7" y="151.7" width="20.3" height="16.6" fill="#fff" stroke="#333" stroke-width="1.3"/><path d="M1583.7 154.2 H1604" stroke="#333" stroke-width="1.1"/><path d="M1593.5 157 V166.3 M1589.8 162.8 L1593.5 166.5 L1597.2 162.8" stroke="#2b8fd6" stroke-width="1.4" fill="none"/><path d="M1613.4 158.6 L1616.7 162.6 L1620 158.6" stroke="#3a3a3a" stroke-width="1.5" fill="none"/><path d="M1585 197.4 L1596 185.3 L1603 192 L1591.8 204 Z" fill="#fff" stroke="#b044c0" stroke-width="1.4" stroke-linejoin="round"/><path d="M1585 197.4 L1589.2 193 L1596 199.6 L1591.8 204 Z" fill="#e79ef0" stroke="#b044c0" stroke-width="1.4" stroke-linejoin="round"/><path d="M1613.4 193.4 L1616.7 197.2 L1620 193.4" stroke="#3a3a3a" stroke-width="1.5" fill="none"/><path d="M1671.6 125.8 H1691 V128.8 L1683.4 136.8 V146 H1679.3 V136.8 L1671.6 128.8 Z" fill="#fff" stroke="#333" stroke-width="1.3" stroke-linejoin="round"/><path d="M1690 190.6 L1693.4 194.6 L1696.8 190.6" stroke="#3a3a3a" stroke-width="1.5" fill="none"/><circle cx="1742.6" cy="129.8" r="13.5" fill="#f7f7f7" stroke="#333" stroke-width="1.3"/><path d="M1732.6 139.8 L1718.8 153.6" stroke="#333" stroke-width="1.4"/><path d="M1759 190.6 L1762.4 194.6 L1765.8 190.6" stroke="#3a3a3a" stroke-width="1.5" fill="none"/><path d="M1780.9 111.5 V228.5" stroke="#d6d6d6" stroke-width="1"/><g stroke="#d65a28" stroke-width="1.5" fill="none"><rect x="1805.5" y="116.8" width="35.8" height="35.5"/><rect x="1809.6" y="120.6" width="12" height="11.8"/><rect x="1825.6" y="120.6" width="12" height="11.8"/><rect x="1809.6" y="136.6" width="12" height="11.8"/><rect x="1825.6" y="136.6" width="12" height="11.8"/></g><path d="M1864.5 111.5 V228.5" stroke="#d6d6d6" stroke-width="1"/><path d="M1883.8 216.2 L1889.9 222.4 L1896 216.2" stroke="#333" stroke-width="1.5" fill="none"/></svg>
<div style="position:absolute;left:12px;top:249px;width:131.75px;height:27px;background:#fff;border-radius:5px;box-shadow:0 0 0 1px rgba(0,0,0,0.05)"></div>
<div style="position:absolute;left:15.25px;top:255.30px;white-space:nowrap;color:#222;font-family:'Liberation Sans', sans-serif;font-size:17.39px;line-height:17.39px;font-weight:400;letter-spacing:-0.250px;">D4</div>
<div style="position:absolute;left:173.75px;top:249px;width:110px;height:27px;background:#fff;border-radius:5px;box-shadow:0 0 0 1px rgba(0,0,0,0.05)"></div>
<div style="position:absolute;left:243.75px;top:251.20px;white-space:nowrap;color:#333;font-family:'Liberation Serif', serif;font-size:21.00px;line-height:21.00px;font-weight:400;font-style:italic;letter-spacing:3.750px;">fx</div>
<div style="position:absolute;left:287px;top:248.5px;width:1621.5px;height:27.5px;background:#fff;border-radius:5px;box-shadow:0 0 0 1px rgba(0,0,0,0.05)"></div>
<div style="position:absolute;left:287.5px;top:242.25px;width:557.5px;height:40px;border:4.5px solid #0a43d8;box-sizing:border-box"></div>
<div style="position:absolute;left:304.00px;top:255.30px;white-space:nowrap;color:#111;font-family:'Liberation Mono', monospace;font-size:18.03px;line-height:18.03px;font-weight:400;letter-spacing:-0.117px;">=VLOOKUP($A$4, Employee_List!$A$2:$E$11, 3, FALSE)</div>
<div style="position:absolute;left:0px;top:287px;width:1896px;height:36px;background:#efefef"></div>
<div style="position:absolute;left:0px;top:323px;width:50px;height:741px;background:#efefef"></div>
<div style="position:absolute;left:51px;top:324px;width:1844px;height:740px;background:#fff"></div>
<div style="position:absolute;left:442px;top:287px;width:214px;height:36px;background:#e0e0e0"></div>
<div style="position:absolute;left:0px;top:442px;width:50px;height:38px;background:#e0e0e0"></div>
<svg style="position:absolute;left:14px;top:289px;" width="36" height="34" viewBox="0 0 36 34" fill="none"><path d="M2 32 L34 0 L34 32 Z" fill="#dddddd"/></svg>
<div style="position:absolute;left:51px;top:362px;width:1844px;height:1px;background:#e9e9e9"></div>
<div style="position:absolute;left:6px;top:362px;width:44px;height:1px;background:#e2e2e2"></div>
<div style="position:absolute;left:51px;top:401px;width:1844px;height:1px;background:#e9e9e9"></div>
<div style="position:absolute;left:6px;top:401px;width:44px;height:1px;background:#e2e2e2"></div>
<div style="position:absolute;left:51px;top:441px;width:1844px;height:1px;background:#e9e9e9"></div>
<div style="position:absolute;left:6px;top:441px;width:44px;height:1px;background:#e2e2e2"></div>
<div style="position:absolute;left:51px;top:480px;width:1844px;height:1px;background:#e9e9e9"></div>
<div style="position:absolute;left:6px;top:480px;width:44px;height:1px;background:#e2e2e2"></div>
<div style="position:absolute;left:51px;top:519px;width:1844px;height:1px;background:#e9e9e9"></div>
<div style="position:absolute;left:6px;top:519px;width:44px;height:1px;background:#e2e2e2"></div>
<div style="position:absolute;left:51px;top:559px;width:1844px;height:1px;background:#e9e9e9"></div>
<div style="position:absolute;left:6px;top:559px;width:44px;height:1px;background:#e2e2e2"></div>
<div style="position:absolute;left:51px;top:598px;width:1844px;height:1px;background:#e9e9e9"></div>
<div style="position:absolute;left:6px;top:598px;width:44px;height:1px;background:#e2e2e2"></div>
<div style="position:absolute;left:51px;top:637px;width:1844px;height:1px;background:#e9e9e9"></div>
<div style="position:absolute;left:6px;top:637px;width:44px;height:1px;background:#e2e2e2"></div>
<div style="position:absolute;left:51px;top:677px;width:1844px;height:1px;background:#e9e9e9"></div>
<div style="position:absolute;left:6px;top:677px;width:44px;height:1px;background:#e2e2e2"></div>
<div style="position:absolute;left:51px;top:716px;width:1844px;height:1px;background:#e9e9e9"></div>
<div style="position:absolute;left:6px;top:716px;width:44px;height:1px;background:#e2e2e2"></div>
<div style="position:absolute;left:51px;top:755px;width:1844px;height:1px;background:#e9e9e9"></div>
<div style="position:absolute;left:6px;top:755px;width:44px;height:1px;background:#e2e2e2"></div>
<div style="position:absolute;left:51px;top:795px;width:1844px;height:1px;background:#e9e9e9"></div>
<div style="position:absolute;left:6px;top:795px;width:44px;height:1px;background:#e2e2e2"></div>
<div style="position:absolute;left:51px;top:834px;width:1844px;height:1px;background:#e9e9e9"></div>
<div style="position:absolute;left:6px;top:834px;width:44px;height:1px;background:#e2e2e2"></div>
<div style="position:absolute;left:51px;top:874px;width:1844px;height:1px;background:#e9e9e9"></div>
<div style="position:absolute;left:6px;top:874px;width:44px;height:1px;background:#e2e2e2"></div>
<div style="position:absolute;left:51px;top:913px;width:1844px;height:1px;background:#e9e9e9"></div>
<div style="position:absolute;left:6px;top:913px;width:44px;height:1px;background:#e2e2e2"></div>
<div style="position:absolute;left:51px;top:952px;width:1844px;height:1px;background:#e9e9e9"></div>
<div style="position:absolute;left:6px;top:952px;width:44px;height:1px;background:#e2e2e2"></div>
<div style="position:absolute;left:51px;top:992px;width:1844px;height:1px;background:#e9e9e9"></div>
<div style="position:absolute;left:6px;top:992px;width:44px;height:1px;background:#e2e2e2"></div>
<div style="position:absolute;left:51px;top:1031px;width:1844px;height:1px;background:#e9e9e9"></div>
<div style="position:absolute;left:6px;top:1031px;width:44px;height:1px;background:#e2e2e2"></div>
<div style="position:absolute;left:217px;top:324px;width:1px;height:740px;background:#e9e9e9"></div>
<div style="position:absolute;left:217px;top:296px;width:1px;height:27px;background:#dedede"></div>
<div style="position:absolute;left:442px;top:324px;width:1px;height:740px;background:#e9e9e9"></div>
<div style="position:absolute;left:442px;top:296px;width:1px;height:27px;background:#dedede"></div>
<div style="position:absolute;left:656px;top:324px;width:1px;height:740px;background:#e9e9e9"></div>
<div style="position:absolute;left:656px;top:296px;width:1px;height:27px;background:#dedede"></div>
<div style="position:absolute;left:780px;top:324px;width:1px;height:117px;background:#e9e9e9"></div>
<div style="position:absolute;left:780px;top:519px;width:1px;height:545px;background:#e9e9e9"></div>
<div style="position:absolute;left:780px;top:296px;width:1px;height:27px;background:#dedede"></div>
<div style="position:absolute;left:905px;top:324px;width:1px;height:740px;background:#e9e9e9"></div>
<div style="position:absolute;left:905px;top:296px;width:1px;height:27px;background:#dedede"></div>
<div style="position:absolute;left:1030px;top:324px;width:1px;height:740px;background:#e9e9e9"></div>
<div style="position:absolute;left:1030px;top:296px;width:1px;height:27px;background:#dedede"></div>
<div style="position:absolute;left:1155px;top:324px;width:1px;height:740px;background:#e9e9e9"></div>
<div style="position:absolute;left:1155px;top:296px;width:1px;height:27px;background:#dedede"></div>
<div style="position:absolute;left:1279px;top:324px;width:1px;height:740px;background:#e9e9e9"></div>
<div style="position:absolute;left:1279px;top:296px;width:1px;height:27px;background:#dedede"></div>
<div style="position:absolute;left:1404px;top:324px;width:1px;height:740px;background:#e9e9e9"></div>
<div style="position:absolute;left:1404px;top:296px;width:1px;height:27px;background:#dedede"></div>
<div style="position:absolute;left:1529px;top:324px;width:1px;height:740px;background:#e9e9e9"></div>
<div style="position:absolute;left:1529px;top:296px;width:1px;height:27px;background:#dedede"></div>
<div style="position:absolute;left:1653px;top:324px;width:1px;height:740px;background:#e9e9e9"></div>
<div style="position:absolute;left:1653px;top:296px;width:1px;height:27px;background:#dedede"></div>
<div style="position:absolute;left:1778px;top:324px;width:1px;height:740px;background:#e9e9e9"></div>
<div style="position:absolute;left:1778px;top:296px;width:1px;height:27px;background:#dedede"></div>
<div style="position:absolute;left:1903px;top:296px;width:1px;height:27px;background:#dedede"></div>
<div style="position:absolute;left:219px;top:296px;width:1px;height:27px;background:#dcdcdc"></div>
<div style="position:absolute;left:223px;top:296px;width:1px;height:27px;background:#e9e9e9"></div>
<div style="position:absolute;left:0px;top:323px;width:1895px;height:1px;background:#c0c0c0"></div>
<div style="position:absolute;left:50px;top:287px;width:1px;height:777px;background:#bdbdbd"></div>
<div style="position:absolute;left:442px;top:321.5px;width:214px;height:2px;background:#1e6b45"></div>
<div style="position:absolute;left:48px;top:441px;width:2.5px;height:40px;background:#1e6b45"></div>
<div style="position:absolute;left:125.50px;top:293.80px;white-space:nowrap;color:#3a3a3a;font-family:'Liberation Sans', sans-serif;font-size:25.36px;line-height:25.36px;font-weight:400;">A</div>
<div style="position:absolute;left:321.00px;top:293.80px;white-space:nowrap;color:#3a3a3a;font-family:'Liberation Sans', sans-serif;font-size:25.36px;line-height:25.36px;font-weight:400;">C</div>
<div style="position:absolute;left:540.15px;top:293.80px;white-space:nowrap;color:#1e6b45;font-family:'Liberation Sans', sans-serif;font-size:25.36px;line-height:25.36px;font-weight:400;">D</div>
<div style="position:absolute;left:709.90px;top:293.80px;white-space:nowrap;color:#3a3a3a;font-family:'Liberation Sans', sans-serif;font-size:25.36px;line-height:25.36px;font-weight:400;">E</div>
<div style="position:absolute;left:834.85px;top:293.80px;white-space:nowrap;color:#3a3a3a;font-family:'Liberation Sans', sans-serif;font-size:25.36px;line-height:25.36px;font-weight:400;">F</div>
<div style="position:absolute;left:958.55px;top:293.80px;white-space:nowrap;color:#3a3a3a;font-family:'Liberation Sans', sans-serif;font-size:25.36px;line-height:25.36px;font-weight:400;">G</div>
<div style="position:absolute;left:1083.75px;top:293.80px;white-space:nowrap;color:#3a3a3a;font-family:'Liberation Sans', sans-serif;font-size:25.36px;line-height:25.36px;font-weight:400;">H</div>
<div style="position:absolute;left:1213.95px;top:293.80px;white-space:nowrap;color:#3a3a3a;font-family:'Liberation Sans', sans-serif;font-size:25.36px;line-height:25.36px;font-weight:400;">I</div>
<div style="position:absolute;left:1336.15px;top:293.80px;white-space:nowrap;color:#3a3a3a;font-family:'Liberation Sans', sans-serif;font-size:25.36px;line-height:25.36px;font-weight:400;">J</div>
<div style="position:absolute;left:1457.85px;top:293.80px;white-space:nowrap;color:#3a3a3a;font-family:'Liberation Sans', sans-serif;font-size:25.36px;line-height:25.36px;font-weight:400;">K</div>
<div style="position:absolute;left:1584.05px;top:293.80px;white-space:nowrap;color:#3a3a3a;font-family:'Liberation Sans', sans-serif;font-size:25.36px;line-height:25.36px;font-weight:400;">L</div>
<div style="position:absolute;left:1705.75px;top:293.80px;white-space:nowrap;color:#3a3a3a;font-family:'Liberation Sans', sans-serif;font-size:25.36px;line-height:25.36px;font-weight:400;">M</div>
<div style="position:absolute;left:1831.95px;top:293.80px;white-space:nowrap;color:#3a3a3a;font-family:'Liberation Sans', sans-serif;font-size:25.36px;line-height:25.36px;font-weight:400;">N</div>
<div style="position:absolute;left:17.50px;top:331.50px;white-space:nowrap;color:#3a3a3a;font-family:'Liberation Sans', sans-serif;font-size:25.36px;line-height:25.36px;font-weight:400;">1</div>
<div style="position:absolute;left:18.00px;top:370.86px;white-space:nowrap;color:#3a3a3a;font-family:'Liberation Sans', sans-serif;font-size:25.36px;line-height:25.36px;font-weight:400;">2</div>
<div style="position:absolute;left:18.00px;top:410.22px;white-space:nowrap;color:#3a3a3a;font-family:'Liberation Sans', sans-serif;font-size:25.36px;line-height:25.36px;font-weight:400;">3</div>
<div style="position:absolute;left:18.00px;top:449.58px;white-space:nowrap;color:#1e6b45;font-family:'Liberation Sans', sans-serif;font-size:25.36px;line-height:25.36px;font-weight:400;">4</div>
<div style="position:absolute;left:18.00px;top:488.94px;white-space:nowrap;color:#3a3a3a;font-family:'Liberation Sans', sans-serif;font-size:25.36px;line-height:25.36px;font-weight:400;">5</div>
<div style="position:absolute;left:18.00px;top:528.30px;white-space:nowrap;color:#3a3a3a;font-family:'Liberation Sans', sans-serif;font-size:25.36px;line-height:25.36px;font-weight:400;">6</div>
<div style="position:absolute;left:18.00px;top:567.66px;white-space:nowrap;color:#3a3a3a;font-family:'Liberation Sans', sans-serif;font-size:25.36px;line-height:25.36px;font-weight:400;">7</div>
<div style="position:absolute;left:18.00px;top:607.02px;white-space:nowrap;color:#3a3a3a;font-family:'Liberation Sans', sans-serif;font-size:25.36px;line-height:25.36px;font-weight:400;">8</div>
<div style="position:absolute;left:18.00px;top:646.38px;white-space:nowrap;color:#3a3a3a;font-family:'Liberation Sans', sans-serif;font-size:25.36px;line-height:25.36px;font-weight:400;">9</div>
<div style="position:absolute;left:10.50px;top:685.74px;white-space:nowrap;color:#3a3a3a;font-family:'Liberation Sans', sans-serif;font-size:25.36px;line-height:25.36px;font-weight:400;">10</div>
<div style="position:absolute;left:11.50px;top:725.10px;white-space:nowrap;color:#3a3a3a;font-family:'Liberation Sans', sans-serif;font-size:25.36px;line-height:25.36px;font-weight:400;">11</div>
<div style="position:absolute;left:10.50px;top:764.46px;white-space:nowrap;color:#3a3a3a;font-family:'Liberation Sans', sans-serif;font-size:25.36px;line-height:25.36px;font-weight:400;">12</div>
<div style="position:absolute;left:10.50px;top:803.82px;white-space:nowrap;color:#3a3a3a;font-family:'Liberation Sans', sans-serif;font-size:25.36px;line-height:25.36px;font-weight:400;">13</div>
<div style="position:absolute;left:10.00px;top:843.18px;white-space:nowrap;color:#3a3a3a;font-family:'Liberation Sans', sans-serif;font-size:25.36px;line-height:25.36px;font-weight:400;">14</div>
<div style="position:absolute;left:10.50px;top:882.54px;white-space:nowrap;color:#3a3a3a;font-family:'Liberation Sans', sans-serif;font-size:25.36px;line-height:25.36px;font-weight:400;">15</div>
<div style="position:absolute;left:10.50px;top:921.90px;white-space:nowrap;color:#3a3a3a;font-family:'Liberation Sans', sans-serif;font-size:25.36px;line-height:25.36px;font-weight:400;">16</div>
<div style="position:absolute;left:10.50px;top:961.26px;white-space:nowrap;color:#3a3a3a;font-family:'Liberation Sans', sans-serif;font-size:25.36px;line-height:25.36px;font-weight:400;">17</div>
<div style="position:absolute;left:10.50px;top:1000.62px;white-space:nowrap;color:#3a3a3a;font-family:'Liberation Sans', sans-serif;font-size:25.36px;line-height:25.36px;font-weight:400;">18</div>
<div style="position:absolute;left:10.50px;top:1039.98px;white-space:nowrap;color:#3a3a3a;font-family:'Liberation Sans', sans-serif;font-size:25.36px;line-height:25.36px;font-weight:400;">19</div>
<div style="position:absolute;left:51px;top:0;width:166px;height:1136px;overflow:hidden"><div style="position:absolute;left:-51px;top:0"><div style="position:absolute;left:55.00px;top:329.50px;white-space:nowrap;color:#141414;font-family:'Liberation Sans', sans-serif;font-size:27.54px;line-height:27.54px;font-weight:400;letter-spacing:-0.400px;">Input Employee ID</div></div></div>
<div style="position:absolute;left:222.32px;top:329.50px;white-space:nowrap;color:#141414;font-family:'Liberation Sans', sans-serif;font-size:27.54px;line-height:27.54px;font-weight:400;letter-spacing:-0.350px;transform:scaleX(0.9378);transform-origin:0 0;">Employee Name</div>
<div style="position:absolute;left:446.68px;top:329.50px;white-space:nowrap;color:#141414;font-family:'Liberation Sans', sans-serif;font-size:27.54px;line-height:27.54px;font-weight:400;letter-spacing:-0.350px;transform:scaleX(0.9607);transform-origin:0 0;">Department</div>
<div style="position:absolute;left:661.05px;top:329.50px;white-space:nowrap;color:#141414;font-family:'Liberation Sans', sans-serif;font-size:27.54px;line-height:27.54px;font-weight:400;letter-spacing:-0.350px;transform:scaleX(0.9505);transform-origin:0 0;">Country</div>
<div style="position:absolute;left:55.27px;top:368.86px;white-space:nowrap;color:#141414;font-family:'Liberation Sans', sans-serif;font-size:27.54px;line-height:27.54px;font-weight:400;letter-spacing:-0.350px;transform:scaleX(0.8664);transform-origin:0 0;">E1003</div>
<div style="position:absolute;left:222.28px;top:368.86px;white-space:nowrap;color:#141414;font-family:'Liberation Sans', sans-serif;font-size:27.54px;line-height:27.54px;font-weight:400;letter-spacing:-0.350px;transform:scaleX(0.9595);transform-origin:0 0;">Michael Brown</div>
<div style="position:absolute;left:446.79px;top:368.86px;white-space:nowrap;color:#141414;font-family:'Liberation Sans', sans-serif;font-size:27.54px;line-height:27.54px;font-weight:400;letter-spacing:-0.350px;transform:scaleX(0.9031);transform-origin:0 0;">Finance</div>
<div style="position:absolute;left:661.12px;top:368.86px;white-space:nowrap;color:#141414;font-family:'Liberation Sans', sans-serif;font-size:27.54px;line-height:27.54px;font-weight:400;letter-spacing:-0.350px;transform:scaleX(0.8806);transform-origin:0 0;">Canada</div>
<div style="position:absolute;left:55.27px;top:408.22px;white-space:nowrap;color:#141414;font-family:'Liberation Sans', sans-serif;font-size:27.54px;line-height:27.54px;font-weight:400;letter-spacing:-0.350px;transform:scaleX(0.8664);transform-origin:0 0;">E1004</div>
<div style="position:absolute;left:223.25px;top:408.22px;white-space:nowrap;color:#141414;font-family:'Liberation Sans', sans-serif;font-size:27.54px;line-height:27.54px;font-weight:400;letter-spacing:-0.350px;transform:scaleX(0.9470);transform-origin:0 0;">Sophia Wilson</div>
<div style="position:absolute;left:446.89px;top:408.22px;white-space:nowrap;color:#141414;font-family:'Liberation Sans', sans-serif;font-size:27.54px;line-height:27.54px;font-weight:400;letter-spacing:-0.350px;transform:scaleX(0.8568);transform-origin:0 0;">HR</div>
<div style="position:absolute;left:662.00px;top:408.22px;white-space:nowrap;color:#141414;font-family:'Liberation Sans', sans-serif;font-size:27.54px;line-height:27.54px;font-weight:400;letter-spacing:-0.350px;transform:scaleX(0.9165);transform-origin:0 0;">Australia</div>
<div style="position:absolute;left:55.27px;top:447.58px;white-space:nowrap;color:#141414;font-family:'Liberation Sans', sans-serif;font-size:27.54px;line-height:27.54px;font-weight:400;letter-spacing:-0.350px;transform:scaleX(0.8664);transform-origin:0 0;">E1005</div>
<div style="position:absolute;left:222.30px;top:447.58px;white-space:nowrap;color:#141414;font-family:'Liberation Sans', sans-serif;font-size:27.54px;line-height:27.54px;font-weight:400;letter-spacing:-0.350px;transform:scaleX(0.9524);transform-origin:0 0;">Daniel Smith</div>
<div style="position:absolute;left:447.66px;top:447.58px;white-space:nowrap;color:#141414;font-family:'Liberation Sans', sans-serif;font-size:27.54px;line-height:27.54px;font-weight:400;letter-spacing:-0.350px;transform:scaleX(0.9446);transform-origin:0 0;">Operations</div>
<div style="position:absolute;left:660.09px;top:447.58px;white-space:nowrap;color:#141414;font-family:'Liberation Sans', sans-serif;font-size:27.54px;line-height:27.54px;font-weight:400;letter-spacing:-0.350px;transform:scaleX(0.9569);transform-origin:0 0;">United States</div>
<div style="position:absolute;left:55.27px;top:486.94px;white-space:nowrap;color:#141414;font-family:'Liberation Sans', sans-serif;font-size:27.54px;line-height:27.54px;font-weight:400;letter-spacing:-0.350px;transform:scaleX(0.8664);transform-origin:0 0;">E1006</div>
<div style="position:absolute;left:223.26px;top:486.94px;white-space:nowrap;color:#141414;font-family:'Liberation Sans', sans-serif;font-size:27.54px;line-height:27.54px;font-weight:400;letter-spacing:-0.350px;transform:scaleX(0.9415);transform-origin:0 0;">Olivia Johnson</div>
<div style="position:absolute;left:446.63px;top:486.94px;white-space:nowrap;color:#141414;font-family:'Liberation Sans', sans-serif;font-size:27.54px;line-height:27.54px;font-weight:400;letter-spacing:-0.350px;transform:scaleX(0.9864);transform-origin:0 0;">Marketing</div>
<div style="position:absolute;left:660.09px;top:486.94px;white-space:nowrap;color:#141414;font-family:'Liberation Sans', sans-serif;font-size:27.54px;line-height:27.54px;font-weight:400;letter-spacing:-0.350px;transform:scaleX(0.9569);transform-origin:0 0;">United States</div>
<div style="position:absolute;left:55.24px;top:526.30px;white-space:nowrap;color:#141414;font-family:'Liberation Sans', sans-serif;font-size:27.54px;line-height:27.54px;font-weight:400;letter-spacing:-0.350px;transform:scaleX(0.8780);transform-origin:0 0;">E1007</div>
<div style="position:absolute;left:224.20px;top:526.30px;white-space:nowrap;color:#141414;font-family:'Liberation Sans', sans-serif;font-size:27.54px;line-height:27.54px;font-weight:400;letter-spacing:-0.350px;transform:scaleX(0.9190);transform-origin:0 0;">James Anderson</div>
<div style="position:absolute;left:447.78px;top:526.30px;white-space:nowrap;color:#141414;font-family:'Liberation Sans', sans-serif;font-size:27.54px;line-height:27.54px;font-weight:400;letter-spacing:-0.350px;transform:scaleX(0.8216);transform-origin:0 0;">Sales</div>
<div style="position:absolute;left:660.07px;top:526.30px;white-space:nowrap;color:#141414;font-family:'Liberation Sans', sans-serif;font-size:27.54px;line-height:27.54px;font-weight:400;letter-spacing:-0.350px;transform:scaleX(0.9628);transform-origin:0 0;">Ireland</div>
<div style="position:absolute;left:440.7px;top:440px;width:217.3px;height:42.4px;border:2px solid #1e6b45;box-sizing:border-box"></div>
<div style="position:absolute;left:652.2px;top:477px;width:7.4px;height:7.2px;background:#1e6b45;border:1px solid #fff;box-sizing:border-box"></div>
<div style="position:absolute;left:1895px;top:287px;width:25px;height:777px;background:#f4f4f4"></div>
<div style="position:absolute;left:1897px;top:289px;width:20px;height:773px;background:#fafafa;border-radius:10px"></div>
<div style="position:absolute;left:0px;top:1064px;width:1920px;height:42px;background:#e9ecef"></div>
<div style="position:absolute;left:156.10px;top:1077.60px;white-space:nowrap;color:#303030;font-family:'Liberation Sans', sans-serif;font-size:18.26px;line-height:18.26px;font-weight:400;letter-spacing:-0.350px;transform:scaleX(0.9965);transform-origin:0 0;">Employee_List</div>
<div style="position:absolute;left:296.4px;top:1058px;width:136.6px;height:44px;background:#fff;border-radius:0 0 7px 7px;box-shadow:0 1px 1px rgba(0,0,0,0.08)"></div>
<div style="position:absolute;left:308.01px;top:1072.60px;white-space:nowrap;color:#1f1f1f;font-family:'Liberation Sans', sans-serif;font-size:18.99px;line-height:18.99px;font-weight:400;letter-spacing:-0.350px;transform:scaleX(0.9910);transform-origin:0 0;">Lookup_Form</div>
<div style="position:absolute;left:306.9px;top:1094.8px;width:115.6px;height:2.6px;background:#118040;border-radius:2px"></div>
<div style="position:absolute;left:458.00px;top:1078.50px;white-space:nowrap;color:#2a2a2a;font-family:'Liberation Sans', sans-serif;font-size:17.83px;line-height:17.83px;font-weight:400;letter-spacing:0.154px;">Product_Master</div>
<div style="position:absolute;left:624.20px;top:1078.50px;white-space:nowrap;color:#2a2a2a;font-family:'Liberation Sans', sans-serif;font-size:17.83px;line-height:17.83px;font-weight:400;letter-spacing:-0.215px;">Tax_Rate_Table</div>
<div style="position:absolute;left:1182px;top:1073px;width:713px;height:22.5px;background:#f7f8f9;border-radius:11px"></div>
<div style="position:absolute;left:0px;top:1106px;width:1920px;height:30px;background:#f3f3f3;border-top:1.5px solid #f8f9f9;box-sizing:border-box"></div>
<div style="position:absolute;left:14.60px;top:1116.70px;white-space:nowrap;color:#333;font-family:'Liberation Sans', sans-serif;font-size:13.62px;line-height:13.62px;font-weight:400;letter-spacing:-0.150px;">Ready</div>
<div style="position:absolute;left:103.00px;top:1116.70px;white-space:nowrap;color:#333;font-family:'Liberation Sans', sans-serif;font-size:13.62px;line-height:13.62px;font-weight:400;letter-spacing:0.083px;">Accessibility: Good to go</div>
<div style="position:absolute;left:1523px;top:1107.5px;width:52.4px;height:28.5px;background:#dedede"></div>
<div style="position:absolute;left:1874.42px;top:1114.50px;white-space:nowrap;color:#333;font-family:'Liberation Sans', sans-serif;font-size:15.94px;line-height:15.94px;font-weight:400;letter-spacing:-0.350px;transform:scaleX(0.8775);transform-origin:0 0;">130%</div>
<svg style="position:absolute;left:0px;top:0px;" width="1920" height="1136" viewBox="0 0 1920 1136" fill="none"><path d="M125.5 260.5 L131.5 266.8 L137.5 260.5" stroke="#333" stroke-width="1.6" fill="none"/><g fill="#444"><circle cx="158.3" cy="257.8" r="1.35"/><circle cx="158.3" cy="263.2" r="1.35"/><circle cx="158.3" cy="268.6" r="1.35"/></g><path d="M181 255.3 L196 270.2 M196 255.3 L181 270.2" stroke="#b8b8b8" stroke-width="1.3"/><path d="M210.5 262.5 L217 268.5 L231 255.7" stroke="#b8b8b8" stroke-width="1.3" fill="none"/><path d="M270.5 260.5 L275.85 266.5 L281.2 260.5" stroke="#9a9a9a" stroke-width="1.3" fill="none"/><path d="M1890.5 258.6 L1896.75 265.4 L1903 258.6" stroke="#333" stroke-width="1.6" fill="none"/><path d="M1907.4 294 L1913.1 302 H1901.7 Z" fill="#6a6a6a" stroke="#6a6a6a" stroke-width="1" stroke-linejoin="round"/><rect x="1902.3" y="309.3" width="10.3" height="652.5" rx="5.15" fill="#707070"/><path d="M1907.5 1059 L1913.5 1050.6 H1901.5 Z" fill="#6a6a6a" stroke="#6a6a6a" stroke-width="1" stroke-linejoin="round"/><path d="M35.5 1078.6 L29 1084.3 L35.5 1090" stroke="#8a8a8a" stroke-width="1.4" fill="none"/><path d="M72.5 1078.6 L79 1084.3 L72.5 1090" stroke="#6a6a6a" stroke-width="1.4" fill="none"/><path d="M290.6 1073 V1095.6" stroke="#cfd2d6" stroke-width="1"/><path d="M439.4 1073 V1095.6" stroke="#cfd2d6" stroke-width="1"/><path d="M605 1073 V1095.6" stroke="#cfd2d6" stroke-width="1"/><path d="M767.2 1073 V1095.6" stroke="#cfd2d6" stroke-width="1"/><path d="M824.5 1084.7 H838.6 M831.5 1077.7 V1091.7" stroke="#333" stroke-width="1.5"/><g fill="#444"><circle cx="1158" cy="1080" r="1.35"/><circle cx="1158" cy="1085.5" r="1.35"/><circle cx="1158" cy="1091" r="1.35"/></g><path d="M1186.6 1084.7 L1194.4 1079.5 V1089.9 Z" fill="#6a6a6a" stroke="#6a6a6a" stroke-width="0.8" stroke-linejoin="round"/><rect x="1202.5" y="1079.3" width="666.5" height="11.1" rx="5.55" fill="#707070"/><path d="M1889.4 1084.7 L1880.6 1079.5 V1089.9 Z" fill="#6a6a6a" stroke="#6a6a6a" stroke-width="0.8" stroke-linejoin="round"/><g stroke="#333" stroke-width="1.3" fill="none" stroke-linecap="round" stroke-linejoin="round"><circle cx="86.8" cy="1115.3" r="2.1"/><path d="M80.2 1114.3 C80.5 1118.6 83 1119.6 85.2 1119.8 V1124 L82.6 1130.3 M88.4 1119.8 C90.8 1119.6 93.2 1118.3 93.6 1114.3 M88.4 1119.8 V1123.6"/><path d="M89.3 1126.6 L91.6 1129.4 L96.6 1123.9"/></g><g stroke="#333" stroke-width="1.3" fill="none"><rect x="1540.5" y="1114" width="16" height="15.5"/><path d="M1545.8 1114 V1129.5 M1551.2 1114 V1129.5 M1540.5 1119.2 H1556.5 M1540.5 1124.4 H1556.5"/><rect x="1593.8" y="1113.8" width="18.5" height="16"/><rect x="1597.5" y="1116.5" width="11" height="10.5"/><path d="M1599.5 1119.5 H1606.5 M1599.5 1121.8 H1606.5 M1599.5 1124.1 H1606.5"/><rect x="1647.2" y="1113.8" width="18.5" height="16"/><path d="M1652 1113.8 V1121.5 H1658.5 V1113.8 M1655.3 1113.8 V1121.5"/></g><path d="M1691.8 1121.3 H1701.5" stroke="#555" stroke-width="1.2"/><path d="M1708.7 1121.3 H1841.1" stroke="#777" stroke-width="1.3"/><path d="M1776.3 1117.5 V1125" stroke="#555" stroke-width="1"/><rect x="1778.3" y="1114.7" width="6" height="14.1" fill="#5a5a5a"/><path d="M1848.4 1121.3 H1858.2 M1853.3 1116.4 V1126.2" stroke="#555" stroke-width="1.2"/></svg></body></html>
